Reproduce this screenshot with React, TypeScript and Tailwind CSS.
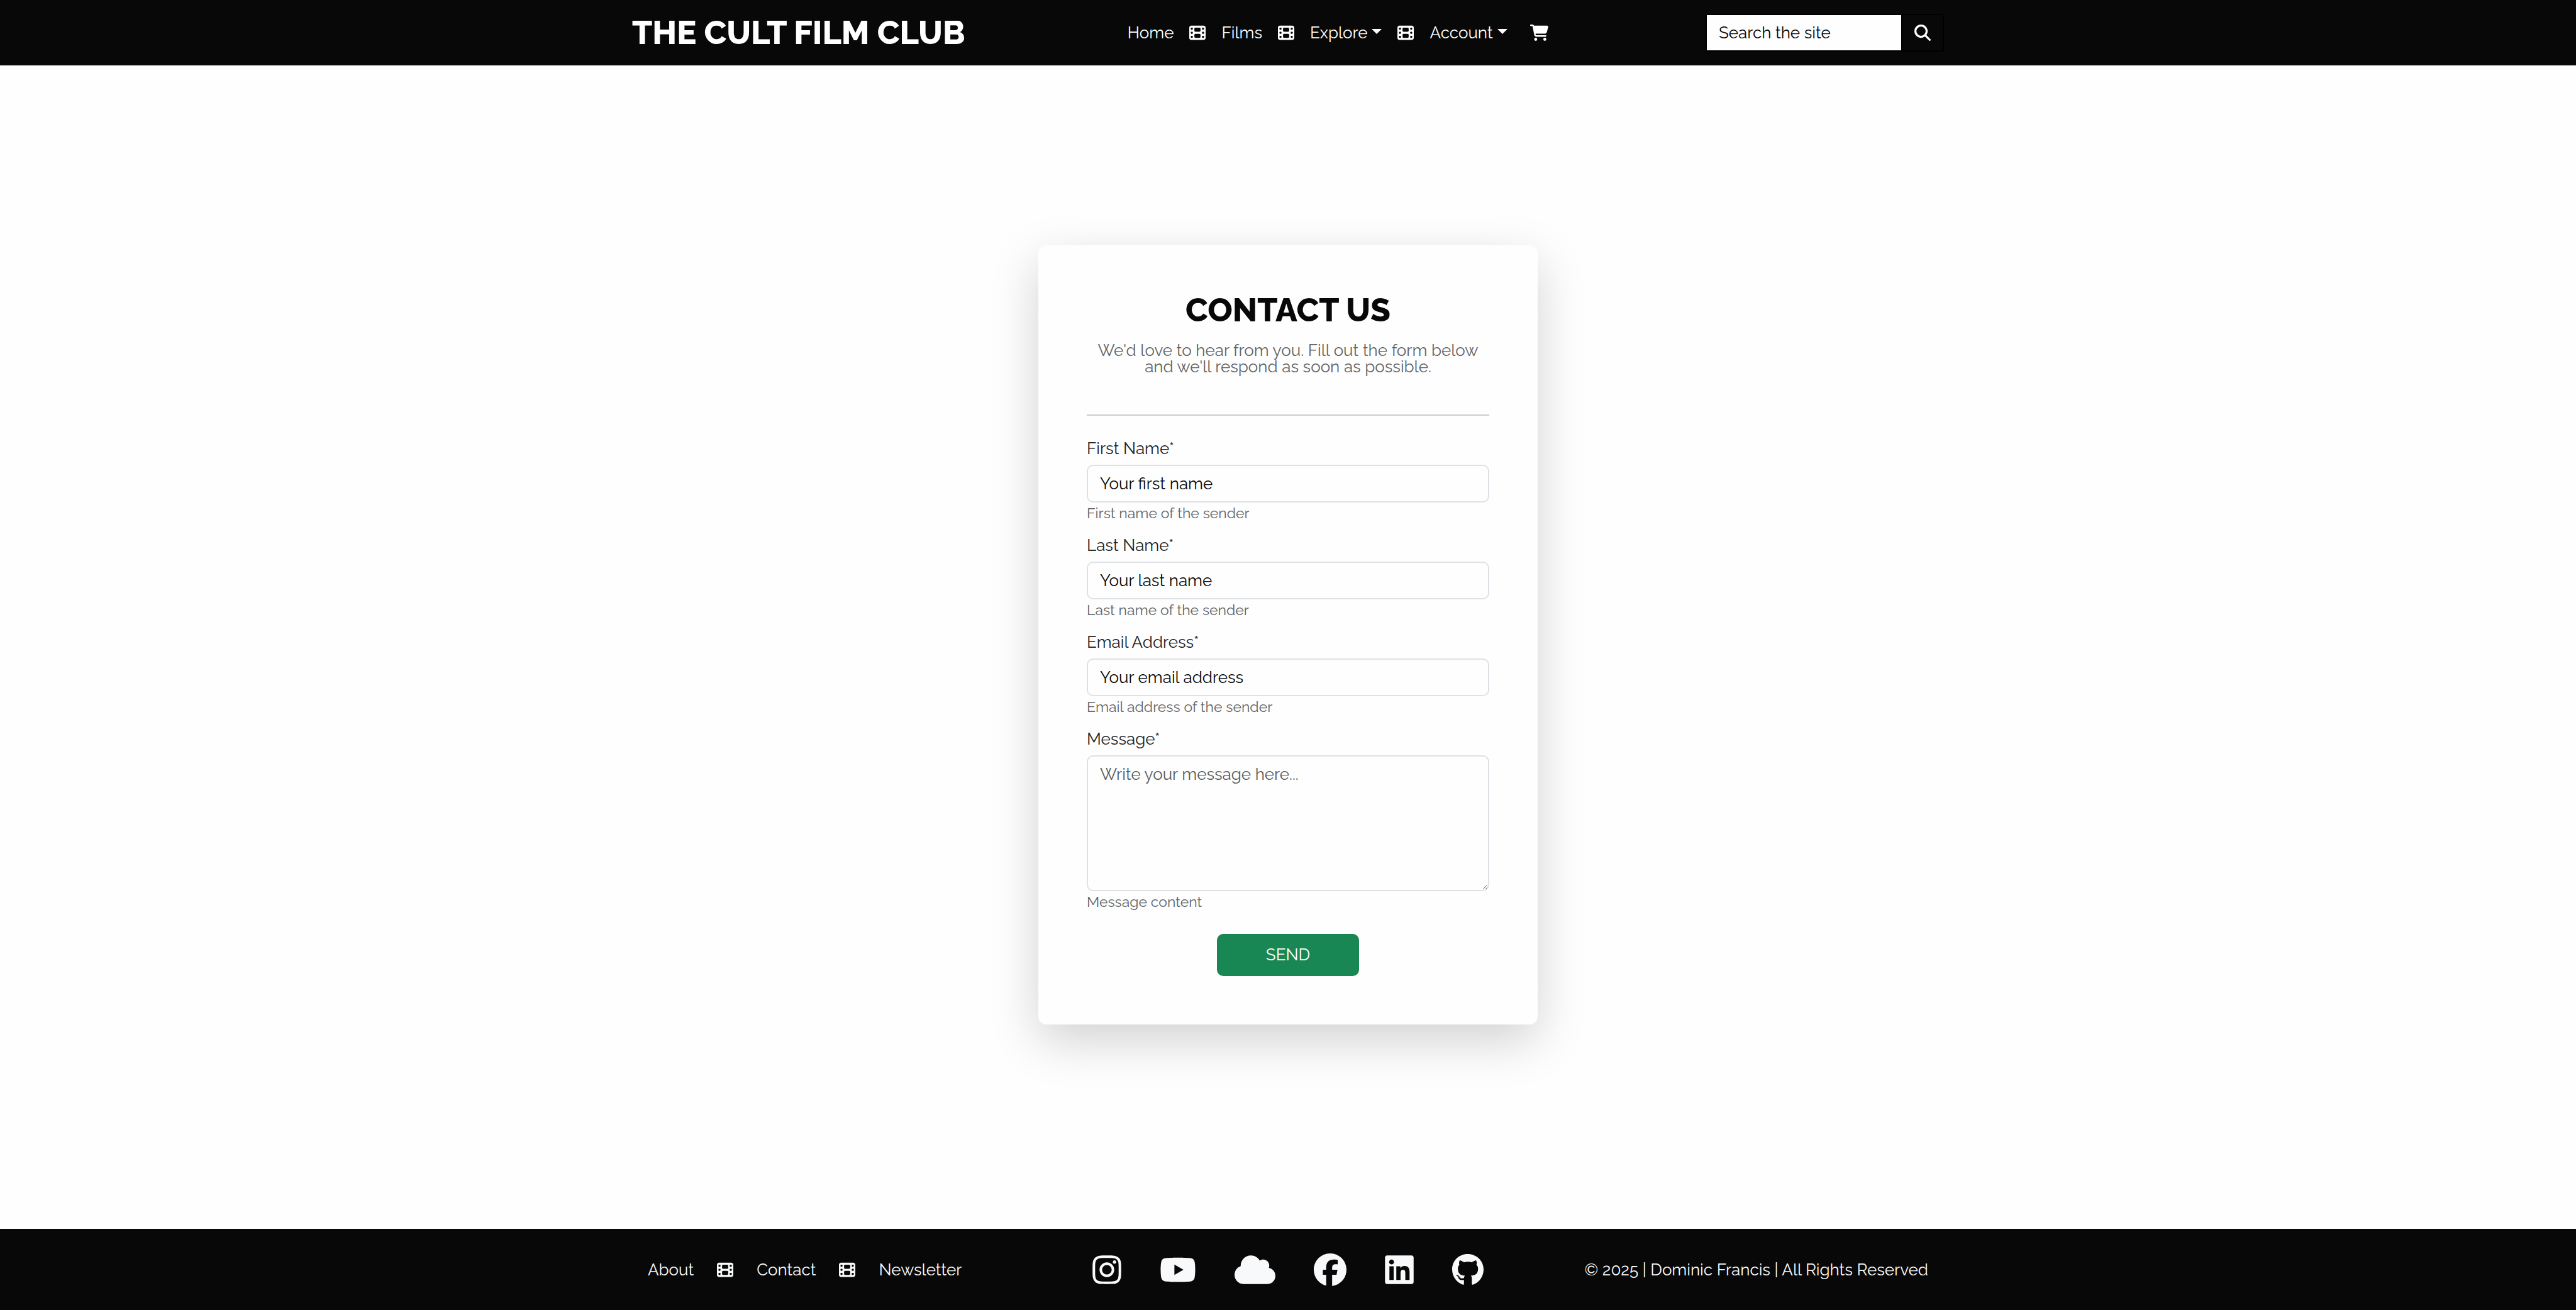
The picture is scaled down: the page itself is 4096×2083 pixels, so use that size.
import React from "react";
import {
  FaCartShopping,
  FaCloud,
  FaFacebook,
  FaFilm,
  FaGithub,
  FaInstagram,
  FaLinkedin,
  FaMagnifyingGlass,
  FaYoutube,
} from "react-icons/fa6";

function FilmSeparator() {
  return <FaFilm aria-hidden className="size-[26px] shrink-0" />;
}

function Caret() {
  return (
    <span
      aria-hidden
      className="mb-1 ml-[7px] border-x-8 border-t-8 border-x-transparent border-t-white"
    />
  );
}

const fieldClass =
  "block w-full rounded-[10px] border-2 border-[#dee2e6] bg-transparent px-[19px] py-[9px] text-[26px] leading-[38px] outline-none";

type FieldProps = {
  id: string;
  label: string;
  placeholder: string;
  help: string;
  type?: string;
  multiline?: boolean;
};

function Field({ id, label, placeholder, help, type = "text", multiline }: FieldProps) {
  return (
    <div>
      <label htmlFor={id} className="mb-[13px] block text-[26px] leading-[26px] text-[#212529]">
        {label}
      </label>
      {multiline ? (
        <textarea
          id={id}
          placeholder={placeholder}
          aria-describedby={id + "-help"}
          className={fieldClass + " h-[216px] resize placeholder:text-[#595c5f]"}
        />
      ) : (
        <input
          id={id}
          type={type}
          placeholder={placeholder}
          aria-describedby={id + "-help"}
          className={fieldClass + " placeholder:text-[#080808]"}
        />
      )}
      <p id={id + "-help"} className="mt-[5px] text-[23px] leading-[23px] text-[#636566]">
        {help}
      </p>
    </div>
  );
}

const socials = [
  { name: "Instagram", Icon: FaInstagram, size: "h-[52px] w-[46px]" },
  { name: "YouTube", Icon: FaYoutube, size: "h-[52px] w-[58px]" },
  { name: "SoundCloud", Icon: FaCloud, size: "h-[52px] w-[65px]" },
  { name: "Facebook", Icon: FaFacebook, size: "h-[52px] w-[52px]" },
  { name: "LinkedIn", Icon: FaLinkedin, size: "h-[52px] w-[46px]" },
  { name: "GitHub", Icon: FaGithub, size: "h-[52px] w-[50px]" },
];

export default function App() {
  return (
    <div className="flex min-h-screen flex-col bg-[#fefefe] font-['Raleway','Lato',sans-serif] text-[26px] leading-[26px] text-[#080808]">
      <header className="bg-[#080808] text-white">
        <div className="mx-auto flex h-[104px] w-full max-w-[2124px] items-center justify-between px-[19px]">
          <a href="#home" className="text-[52px] leading-[52px] font-extrabold whitespace-nowrap">
            THE CULT FILM CLUB
          </a>
          <nav aria-label="Main" className="flex items-center gap-[25px] pl-2">
            <a href="#home">Home</a>
            <FilmSeparator />
            <a href="#films">Films</a>
            <FilmSeparator />
            <button type="button" className="flex items-center">
              Explore
              <Caret />
            </button>
            <FilmSeparator />
            <button type="button" className="flex items-center">
              Account
              <Caret />
            </button>
            <a href="#cart" aria-label="Cart" className="ml-[11px]">
              <FaCartShopping className="h-[26px] w-[29px]" />
            </a>
          </nav>
          <form role="search" className="flex" onSubmit={(e) => e.preventDefault()}>
            <input
              type="search"
              aria-label="Search the site"
              placeholder="Search the site"
              className="w-[313px] border-2 border-black bg-[#fefefe] px-[19px] py-[9px] leading-[38px] text-[#080808] outline-none placeholder:text-[#080808]"
            />
            <button
              type="submit"
              aria-label="Search"
              className="flex items-center border-y-2 border-r-2 border-black px-[19px]"
            >
              <FaMagnifyingGlass className="size-[26px]" />
            </button>
          </form>
        </div>
      </header>

      <main className="flex grow items-center justify-center pb-10">
        <section
          aria-labelledby="contact-title"
          className="w-full max-w-[794px] rounded-[13px] bg-[#fefefe] p-[77px] shadow-[0_26px_77px_rgba(0,0,0,0.175)]"
        >
          <h1 id="contact-title" className="text-center text-[52px] leading-[52px] font-extrabold">
            CONTACT US
          </h1>
          <p className="mt-[25px] text-center text-[#636566]">
            We'd love to hear from you. Fill out the form below and we'll respond as soon as
            possible.
          </p>
          <hr className="mt-[63px] mb-[39px] border-t-2 border-[#cecece]" />
          <form className="flex flex-col gap-[27px]" onSubmit={(e) => e.preventDefault()}>
            <Field
              id="first-name"
              label="First Name*"
              placeholder="Your first name"
              help="First name of the sender"
            />
            <Field
              id="last-name"
              label="Last Name*"
              placeholder="Your last name"
              help="Last name of the sender"
            />
            <Field
              id="email"
              type="email"
              label="Email Address*"
              placeholder="Your email address"
              help="Email address of the sender"
            />
            <Field
              id="message"
              multiline
              label="Message*"
              placeholder="Write your message here..."
              help="Message content"
            />
            <button
              type="submit"
              className="mt-[13px] h-[67px] self-center rounded-[10px] bg-[#198754] px-[78px] text-white"
            >
              SEND
            </button>
          </form>
        </section>
      </main>

      <footer className="bg-[#080808] text-[#f8f9fa]">
        <div className="mx-auto grid h-[129px] w-full max-w-[2124px] grid-cols-[1fr_auto_1fr] items-center px-11">
          <nav aria-label="Footer" className="flex items-center gap-[37px]">
            <a href="#about">About</a>
            <FilmSeparator />
            <a href="#contact">Contact</a>
            <FilmSeparator />
            <a href="#newsletter">Newsletter</a>
          </nav>
          <ul className="flex items-center gap-[61px]">
            {socials.map(({ name, Icon, size }) => (
              <li key={name}>
                <a href={"#" + name.toLowerCase()} aria-label={name}>
                  <Icon className={size} />
                </a>
              </li>
            ))}
          </ul>
          <p className="text-right whitespace-nowrap">
            © 2025 | Dominic Francis | All Rights Reserved
          </p>
        </div>
      </footer>
    </div>
  );
}
